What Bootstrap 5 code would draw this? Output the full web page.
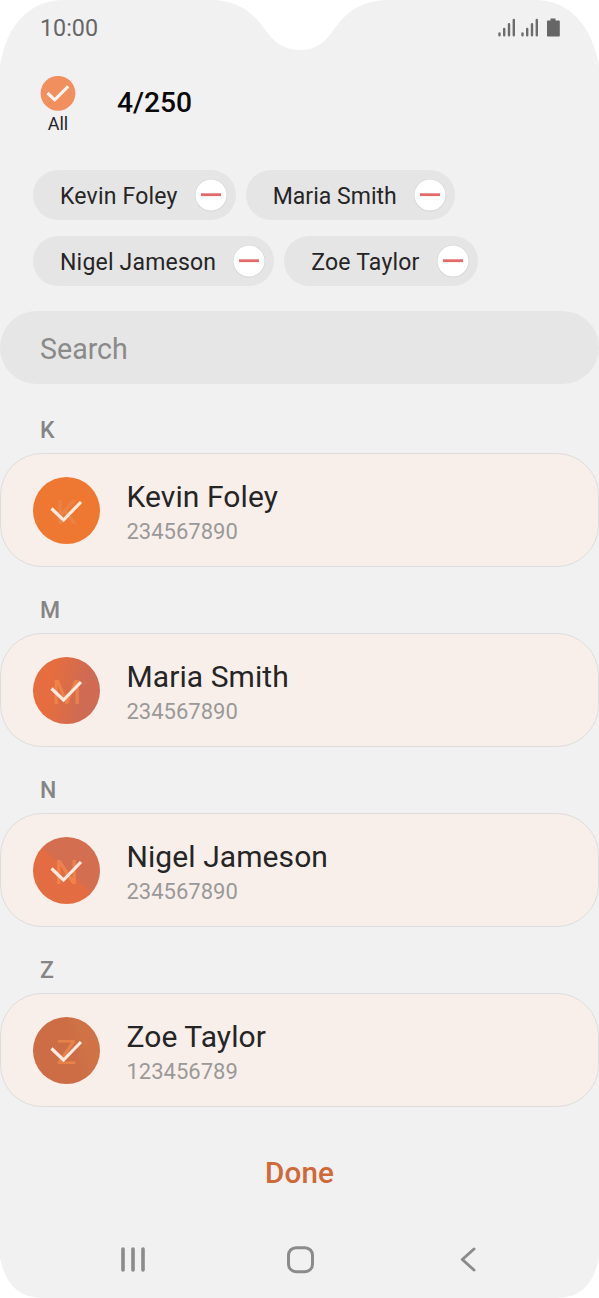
<!DOCTYPE html>
<html lang="en">
<head>
<meta charset="utf-8">
<meta name="viewport" content="width=device-width, initial-scale=1">
<title>Select contacts</title>
<link href="https://cdn.jsdelivr.net/npm/bootstrap@5.3.0/dist/css/bootstrap.min.css" rel="stylesheet">
<style>
body{font-family:Roboto,"Liberation Sans",sans-serif;background:#fff;color:#252525;line-height:1;margin:0}
.phone{width:599px;height:1298px;overflow:hidden}
.shell{left:0;top:0;z-index:0}
.screen{z-index:1;height:100%}
.status{height:56px;padding:0 39px 0 40px;color:#666;font-size:23.3px}
.clock{padding-top:2px}
.signal-gap{margin-left:5px}
.battery{margin-left:7px}
.heading{height:98px;padding:20px 0 0 40px}
.all-box{width:36px;font-size:18px}
.all-label{margin-top:3px}
.count{font-size:28.2px;font-weight:500;color:#0a0a0a;margin:13px 0 0 41px}
.chips{height:157px;padding:16px 33px 0;gap:16px 10px;align-content:flex-start}
.chip-row{gap:10px}
.chip{height:50px;padding:0 8px 0 27px;background:#e5e5e5;font-size:23px;letter-spacing:.1px}
.chip span{padding-top:2px}
.chip svg{margin-left:16px}
.chip.wide{letter-spacing:.2px}
.chip.tight{letter-spacing:.03px}
.search-box{height:73px;padding:3px 40px 0;background:#e6e6e6;color:#8a8a8a;font-size:28.6px}
.letter{height:66px;padding:20px 40px 0;font-size:23px;font-weight:500;color:#858585}
.search-box + .letter{height:69px;padding-top:23px}
.person{height:114px;background:#f9efea;border:1.5px solid #dedddd;border-radius:42px;padding-left:32px}
.avatar{width:67px;height:67px}
.initial{font-size:34px;color:#ff9850;opacity:.5;padding-top:3px}
.tick{left:0;top:0}
.k-bg{background:#ee7831}.k-bg .initial{opacity:.28;color:#e69c80}
.m-bg{background:linear-gradient(100deg,#e56d3f 30%,#cf6b52 72%)}
.n-bg{background:linear-gradient(43deg,#e46c42 48%,#d46e50 52%)}
.z-bg{background:linear-gradient(75deg,#cd6d45 58%,#cf7346 75%)}
.who{margin-left:26.5px;padding-top:5px}
.who-name{font-size:30px;line-height:36px;letter-spacing:.08px}
.who-num{font-size:22px;line-height:30px;color:#999;margin-top:2px}
.done{height:132px;font-size:29.6px;font-weight:500;color:#d0683a;letter-spacing:.2px;padding-top:2px}
.navkeys{height:59px}
</style>
</head>
<body>
<svg width="0" height="0" class="position-absolute" aria-hidden="true">
  <symbol id="minus" viewBox="0 0 34 34"><circle cx="17" cy="17.2" r="16.2" fill="#d5d5d5"/><circle cx="17" cy="17" r="15.5" fill="#fff"/><path d="M7 16.7H27" stroke="#e26a6a" stroke-width="2.8"/></symbol>
  <symbol id="tick" viewBox="0 0 67 67"><path d="M18.5 31.5 30.5 43 48 25" fill="none" stroke="#fdeade" stroke-width="3.2"/></symbol>
  <symbol id="signal" viewBox="0 0 18 20"><path d="M1.5 15.5V17.3M6.2 11V17.3M11 6.2V17.3M15.8 2V17.3" stroke="#6c6c6c" stroke-width="2.4" stroke-linecap="round"/></symbol>
</svg>
<div class="phone position-relative">
  <svg class="shell position-absolute" width="599" height="1298"><path fill="#f1f1f1" d="M0 66C6 25 30 0 64 0H210C233 0 248 8 260 23C270 36 278 50 300 50C321 50 328 37 338 24C350 9 365 0 390 0H535C569 0 592 25 599 66V1258Q591 1298 557 1298H42Q8 1298 0 1258Z"/></svg>
  <main class="screen position-relative d-flex flex-column">
    <div class="status d-flex align-items-center justify-content-between">
      <span class="clock">10:00</span>
      <span class="d-flex align-items-center">
        <svg width="18" height="20"><use href="#signal"/></svg>
        <svg width="18" height="20" class="signal-gap"><use href="#signal"/></svg>
        <svg width="14" height="20" class="battery"><path fill="#666" d="M4.5.5h5v2H13q.8 0 .8.8V17.8q0 .8-.8.8H1.8Q1 18.6 1 17.8V3.3Q1 2.5 1.8 2.5h2.7Z"/></svg>
      </span>
    </div>
    <div class="heading d-flex">
      <div class="all-box d-flex flex-column align-items-center">
        <svg width="36" height="36"><circle cx="18" cy="17.3" r="17.4" fill="#f18f5f"/><path d="M7.5 17 14.7 23.8 28.2 10.3" fill="none" stroke="#fff5ee" stroke-width="3.2"/></svg>
        <span class="all-label">All</span>
      </div>
      <div class="count">4/250</div>
    </div>
    <div class="chips d-flex flex-wrap">
      <div class="chip wide rounded-pill d-flex align-items-center"><span>Kevin Foley</span><svg width="34" height="34"><use href="#minus"/></svg></div>
      <div class="chip tight rounded-pill d-flex align-items-center"><span>Maria Smith</span><svg width="34" height="34"><use href="#minus"/></svg></div>
      <div class="chip-row w-100 d-flex">
        <div class="chip wide rounded-pill d-flex align-items-center"><span>Nigel Jameson</span><svg width="34" height="34"><use href="#minus"/></svg></div>
        <div class="chip wide rounded-pill d-flex align-items-center"><span>Zoe Taylor</span><svg width="34" height="34"><use href="#minus"/></svg></div>
      </div>
    </div>
    <div class="search-box rounded-pill d-flex align-items-center">Search</div>
    <div class="letter d-flex align-items-center">K</div>
    <div class="person d-flex align-items-center">
      <div class="avatar k-bg rounded-circle position-relative d-flex align-items-center justify-content-center"><span class="initial">K</span><svg class="tick position-absolute" width="67" height="67"><use href="#tick"/></svg></div>
      <div class="who"><div class="who-name">Kevin Foley</div><div class="who-num">234567890</div></div>
    </div>
    <div class="letter d-flex align-items-center">M</div>
    <div class="person d-flex align-items-center">
      <div class="avatar m-bg rounded-circle position-relative d-flex align-items-center justify-content-center"><span class="initial">M</span><svg class="tick position-absolute" width="67" height="67"><use href="#tick"/></svg></div>
      <div class="who"><div class="who-name">Maria Smith</div><div class="who-num">234567890</div></div>
    </div>
    <div class="letter d-flex align-items-center">N</div>
    <div class="person d-flex align-items-center">
      <div class="avatar n-bg rounded-circle position-relative d-flex align-items-center justify-content-center"><span class="initial">N</span><svg class="tick position-absolute" width="67" height="67"><use href="#tick"/></svg></div>
      <div class="who"><div class="who-name">Nigel Jameson</div><div class="who-num">234567890</div></div>
    </div>
    <div class="letter d-flex align-items-center">Z</div>
    <div class="person d-flex align-items-center">
      <div class="avatar z-bg rounded-circle position-relative d-flex align-items-center justify-content-center"><span class="initial">Z</span><svg class="tick position-absolute" width="67" height="67"><use href="#tick"/></svg></div>
      <div class="who"><div class="who-name">Zoe Taylor</div><div class="who-num">123456789</div></div>
    </div>
    <div class="done d-flex align-items-center justify-content-center">Done</div>
    <svg class="navkeys" width="599" height="59" fill="none" stroke="#8b8b8b" stroke-linecap="round" stroke-linejoin="round"><path d="M123 10V31M133 10V31M143 10V31" stroke-width="3.6"/><rect x="288.5" y="8.7" width="24" height="24" rx="7.5" stroke-width="3"/><path d="M474 10 462.3 20.5 474 31" stroke-width="3"/></svg>
  </main>
</div>
<script src="https://cdn.jsdelivr.net/npm/bootstrap@5.3.0/dist/js/bootstrap.bundle.min.js"></script>
</body>
</html>
